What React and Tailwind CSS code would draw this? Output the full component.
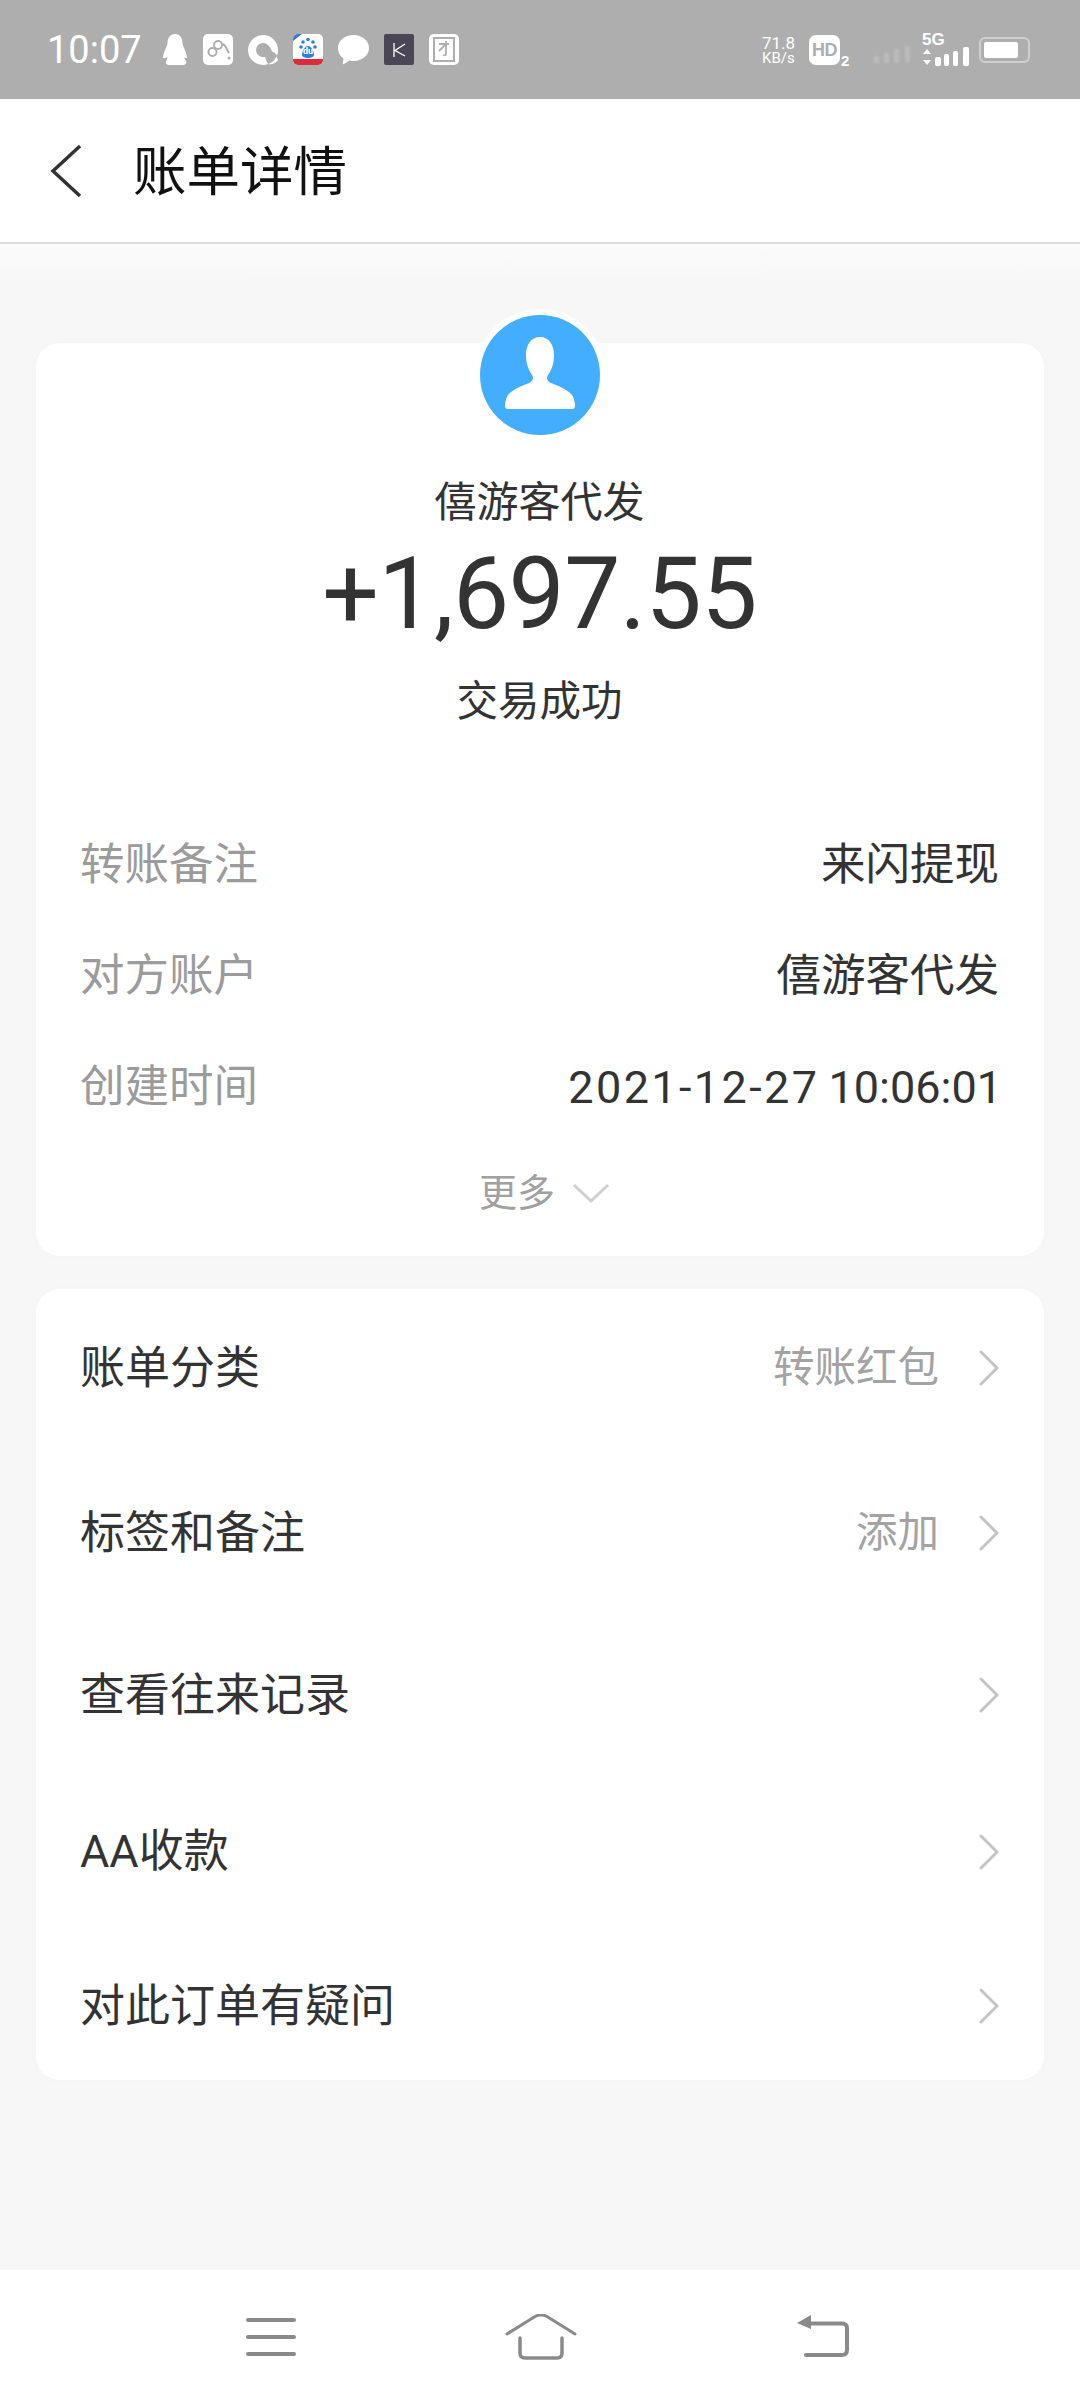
const FONT = "font-['Roboto','Noto_Sans_CJK_SC',sans-serif]";

function Chevron() {
  return (
    <svg width="22" height="36" viewBox="0 0 22 36" fill="none" className="ml-[39px] mr-[-1px] shrink-0">
      <path d="M3 2 L19 18 L3 34" stroke="#c4c4c4" strokeWidth="3" strokeLinecap="round" strokeLinejoin="round" />
    </svg>
  );
}

function Qq() {
  return (
    <svg width="26" height="31" viewBox="0 0 26 31">
      <path d="M13 0c5 0 7.500 4 7.500 9 0 2 .8 3 2 6 1.500 3.500 2.500 7 2.500 8.500 0 1-1 1-2.500-.5 0 2 1 3 1.500 4.500.8 2-1 3.500-3 3.500H7c-2 0-3.800-1.500-3-3.500.5-1.500 1.500-2.500 1.500-4.500C4 24.500 1 24.500 1 23.500c0-1.500 1-5 2.500-8.500 1.200-3 2-4 2-6C5.500 4 8 0 13 0z" fill="#fff" />
    </svg>
  );
}

function Weibo() {
  return (
    <svg width="30" height="31" viewBox="0 0 30 31">
      <rect width="30" height="31" rx="5" fill="#fff" />
      <circle cx="9.500" cy="18" r="4" fill="none" stroke="#aeaeae" strokeWidth="2" />
      <circle cx="15" cy="11" r="4" fill="none" stroke="#aeaeae" strokeWidth="2" />
      <path d="M19 10c4 0 4 5 7 9" fill="none" stroke="#aeaeae" strokeWidth="2" />
      <circle cx="26" cy="24" r="1.500" fill="#aeaeae" />
    </svg>
  );
}

function Cloud() {
  return (
    <svg width="30" height="30" viewBox="0 0 30 30">
      <path d="M15 0a15 15 0 0 1 15 15c0 2-.4 4-1 5.500-1.500-2.500-3-3.500-5-4C22 11 19 8 15 8a7 7 0 0 0 0 14h2c1 3 2 5 3 7a15 15 0 0 1-5 1A15 15 0 0 1 15 0z" fill="#fff" />
      <path d="M20 29c4-1 6-3 8.500-7.500L30 25c-2 3-6 5-10 4z" fill="#fff" />
    </svg>
  );
}

function Baidu() {
  return (
    <div className="relative w-[30px] h-[31px] rounded-[5px] bg-white overflow-hidden">
      <svg width="30" height="31" viewBox="0 0 30 31" className="absolute inset-0">
        <path d="M0 7 L9 0 H3 Q0 0 0 3z" fill="#3f74d8" />
        <circle cx="10" cy="8" r="1.800" fill="#2f7fe0" />
        <circle cx="15" cy="5.500" r="1.800" fill="#2f7fe0" />
        <circle cx="20" cy="8" r="1.800" fill="#2f7fe0" />
        <circle cx="8" cy="13" r="1.800" fill="#2f7fe0" />
        <circle cx="22" cy="13" r="1.800" fill="#2f7fe0" />
        <path d="M9 21c0-4 3-9 6-9s6 5 6 9-12 4-12 0z" fill="#2f7fe0" />
        <rect x="0" y="25" width="30" height="6" fill="#dc2c3c" />
      </svg>
      <span className="absolute left-0 right-0 top-[12px] text-center text-[9px] leading-[10px] font-bold text-white">du</span>
    </div>
  );
}

function Bubble() {
  return (
    <svg width="31" height="30" viewBox="0 0 31 30">
      <path d="M15.500 0C24 0 31 5.500 31 13s-7 13-15.500 13c-1.500 0-2.500 0-4-.5L6 29c-.5.500-1.500 0-1.200-1l.7-4.500C2 21 0 17.500 0 13 0 5.500 7 0 15.500 0z" fill="#fff" />
    </svg>
  );
}

function KeepIcon() {
  return (
    <div className="w-[30px] h-[31px] rounded-[2px] bg-[#4b4655] flex items-center justify-center">
      <svg width="14" height="14" viewBox="0 0 14 14" fill="none">
        <path d="M2 0 V14 M13 1 L3 7.500 L13 13" stroke="#fff" strokeWidth="1.300" />
      </svg>
    </div>
  );
}

function TuanIcon() {
  return (
    <svg width="30" height="31" viewBox="0 0 30 31" fill="none">
      <rect width="30" height="31" rx="5" fill="#fff" />
      <rect x="5" y="4" width="20" height="23" stroke="#aeaeae" strokeWidth="2" />
      <path d="M10 10 H20 M17 7 V20 Q17 22 14 21 M16 11 L10 17" stroke="#aeaeae" strokeWidth="1.800" />
    </svg>
  );
}

function StatusRight() {
  return (
    <div className="flex items-center">
      <div className="w-[36px] flex flex-col items-start text-white font-['Roboto',sans-serif]">
        <span className="text-[17px] leading-[16px]">71.8</span>
        <span className="text-[15px] leading-[14px]">KB/s</span>
      </div>
      <div className="ml-[11px] w-[31px] h-[30px] rounded-[7px] bg-white flex items-center justify-center">
        <span className="text-[#aeaeae] text-[18px] leading-none font-black font-['Liberation_Sans',sans-serif] tracking-[-0.5px]">HD</span>
      </div>
      <span className="self-end mb-[-2px] ml-[1px] w-[11px] text-white text-[15px] leading-[14px] font-bold font-['Liberation_Sans',sans-serif]">2</span>
      <svg width="36" height="20" viewBox="0 0 36 20" className="ml-[22px] mt-[8px] blur-[1px]">
        <rect x="0" y="12" width="5" height="7" rx="2" fill="#bcbcbc" />
        <rect x="10" y="9" width="5" height="10" rx="2" fill="#bcbcbc" />
        <rect x="20" y="5" width="5" height="14" rx="2" fill="#bcbcbc" />
        <rect x="31" y="2" width="5" height="17" rx="2" fill="#bcbcbc" />
      </svg>
      <div className="ml-[12px] w-[48px] relative h-[32px]">
        <span className="absolute left-0 top-[-2px] text-white text-[17px] leading-[16px] font-bold font-['Liberation_Sans',sans-serif]">5G</span>
        <svg width="48" height="20" viewBox="0 0 48 20" className="absolute left-0 top-[13px]">
          <path d="M1 7 L5 2 L9 7z M1 13 H9 L5 18z" fill="#fff" />
          <rect x="13" y="10" width="6" height="9" rx="2" fill="#fff" />
          <rect x="22" y="7" width="5" height="12" rx="2" fill="#fff" />
          <rect x="31" y="4" width="5" height="15" rx="2" fill="#fff" />
          <rect x="41" y="0" width="6" height="19" rx="2" fill="#fff" />
        </svg>
      </div>
      <div className="ml-[9px] w-[51px] h-[26px] rounded-[6px] border-2 border-[#cfcfcf] p-[3px] flex">
        <div className="w-[34px] h-full rounded-[2px] bg-white" />
      </div>
    </div>
  );
}

function DetailRow({ label, children }) {
  return (
    <div className="h-[111px] flex items-center justify-between">
      <span className="text-[#9b9b9b] text-[44.5px] leading-none">{label}</span>
      {children}
    </div>
  );
}

const ROWS = [
  { label: "账单分类", value: "转账红包", h: "h-[158px]" },
  { label: "标签和备注", value: "添加", h: "h-[172px]" },
  { label: "查看往来记录", h: "h-[152px]" },
  { label: "AA收款", h: "h-[161px]" },
  { label: "对此订单有疑问", h: "h-[148px]" },
];

export default function App() {
  return (
    <div className={`w-[1080px] h-[2400px] flex flex-col overflow-hidden bg-[#f6f6f6] ${FONT}`}>
      <div className="h-[99px] shrink-0 bg-[#aeaeae] flex items-center justify-between pl-[47px] pr-[50px]">
        <div className="flex items-center">
          <span className="text-white text-[38px] leading-none w-[115px] font-['Roboto',sans-serif]">10:07</span>
          <div className="flex items-center gap-[15px]">
            <Qq />
            <Weibo />
            <Cloud />
            <Baidu />
            <Bubble />
            <KeepIcon />
            <TuanIcon />
          </div>
        </div>
        <StatusRight />
      </div>

      <div className="h-[145px] shrink-0 bg-white border-b-2 border-[#dcdcdc] flex items-center pl-[50px]">
        <svg width="32" height="54" viewBox="0 0 32 54" fill="none">
          <path d="M30 2 L3 27 L30 52" stroke="#333" strokeWidth="3.500" />
        </svg>
        <h1 className="ml-[51px] mt-[4px] text-[53.5px] leading-none font-normal text-[#111]">账单详情</h1>
      </div>

      <main className="flex-1 px-[36px] pt-[99px] bg-[linear-gradient(#fbfbfb_0,#f7f7f7_42px)]">
        <section className="rounded-[24px] bg-white shadow-[0_0_12px_rgba(0,0,0,0.015)] pl-[44px] pr-[45px] pb-[38px] flex flex-col">
          <div className="self-center -mt-[28px] w-[120px] h-[120px] rounded-full bg-[#44aefe] ring-[6px] ring-white/70 overflow-hidden flex items-end justify-center">
            <svg width="72" height="72" viewBox="0 0 72 72" className="mb-[26px]">
              <path d="M36 0c9 0 14 8 14 18 0 8-2 14-6 20-2 3-1 6 3 8 8 3 17 7 21 12 2 3 3 7 3 11 0 2-1 3-3 3H4c-2 0-3-1-3-3 0-4 1-8 3-11 4-5 13-9 21-12 4-2 5-5 3-8-4-6-6-12-6-20C22 8 27 0 36 0z" fill="#fff" />
            </svg>
          </div>
          <div className="mt-[43px] text-center text-[42px] leading-[50px] text-[#333]">僖游客代发</div>
          <div className="text-center text-[100px] leading-[110px] mt-[11px] text-[#333] font-['Roboto',sans-serif] tracking-[-0.6px]">+1,697.55</div>
          <div className="mt-[28px] text-center text-[41.5px] leading-[50px] text-[#333]">交易成功</div>
          <div className="mt-[83px]">
            <DetailRow label="转账备注">
              <span className="text-[#333] text-[44.5px] leading-none">来闪提现</span>
            </DetailRow>
            <DetailRow label="对方账户">
              <span className="text-[#333] text-[44.5px] leading-none">僖游客代发</span>
            </DetailRow>
            <DetailRow label="创建时间">
              <span className="flex text-[#333] text-[45px] leading-none font-['Roboto',sans-serif] mr-[-3px]">
                <span className="tracking-[2.4px]">2021-12-27</span>
                <span className="ml-[9px]">10:06:01</span>
              </span>
            </DetailRow>
          </div>
          <div className="mt-[25px] h-[50px] flex items-center justify-center pl-[10px] text-[#a0a0a0] text-[38px]">
            <span className="leading-none">更多</span>
            <svg width="38" height="22" viewBox="0 0 38 22" fill="none" className="ml-[17px]">
              <path d="M2 3 L19 19 L36 3" stroke="#cfcfcf" strokeWidth="3" />
            </svg>
          </div>
        </section>

        <section className="mt-[33px] rounded-[24px] bg-white shadow-[0_0_12px_rgba(0,0,0,0.015)] pl-[44px] pr-[45px]">
          {ROWS.map((r) => (
            <div key={r.label} className={`${r.h} flex items-center`}>
              <span className="flex-1 text-[#333] text-[45px] leading-none">{r.label}</span>
              {r.value && <span className="text-[#a3a3a3] text-[41.5px] leading-none">{r.value}</span>}
              <Chevron />
            </div>
          ))}
        </section>
      </main>

      <nav className="h-[130px] shrink-0 bg-white flex items-start pt-[44px] pl-[246px]">
        <svg width="50" height="40" viewBox="0 0 50 40" fill="none" className="mt-[3px]">
          <path d="M2 3 H48 M2 20 H48 M2 37 H48" stroke="#8a8a8a" strokeWidth="4" strokeLinecap="round" />
        </svg>
        <svg width="72" height="46" viewBox="0 0 72 46" fill="none" className="ml-[209px]">
          <path d="M2 20 L30 2.500 Q36 -.500 42 2.500 L70 20" stroke="#8a8a8a" strokeWidth="3" strokeLinecap="round" />
          <path d="M15 24 V39 Q15 44 20 44 H52 Q57 44 57 39 V24" stroke="#8a8a8a" strokeWidth="3.500" strokeLinecap="round" />
        </svg>
        <svg width="54" height="44" viewBox="0 0 54 44" fill="none" className="ml-[219px]">
          <path d="M1 9 L15 1 V15z" fill="#8a8a8a" />
          <path d="M8 9.500 H46 Q51 9.500 51 14 V36 Q51 41 46 41 H10" stroke="#8a8a8a" strokeWidth="4" strokeLinecap="round" />
        </svg>
      </nav>
    </div>
  );
}
